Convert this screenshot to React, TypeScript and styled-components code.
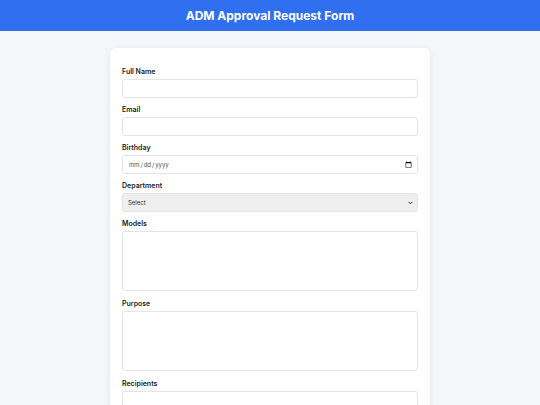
import React from "react";
import styled, { createGlobalStyle } from "styled-components";

const Global = createGlobalStyle`
  html, body { margin: 0; padding: 0; }
  body {
    background: #f4f6fa;
    font-family: Inter, "Noto Sans", "Liberation Sans", sans-serif;
    color: #222;
  }
  * { box-sizing: border-box; }
`;

const Header = styled.header`
  height: 31px;
  background: #2f6ff0;
  display: flex;
  align-items: center;
  justify-content: center;
`;

const Title = styled.h1`
  margin: 0;
  color: #fff;
  font-size: 12px;
  font-weight: 700;
`;

const Main = styled.main`
  display: flex;
  justify-content: center;
  padding-top: 17px;
`;

const Card = styled.form`
  width: 320px;
  background: #fff;
  border-radius: 6px;
  box-shadow: 0 1px 6px rgba(20, 30, 60, 0.08);
  padding: 19px 12px 16px;
`;

const Field = styled.div`
  margin-bottom: 7px;
`;

const Label = styled.label`
  display: block;
  font-size: 7px;
  line-height: 10px;
  font-weight: 600;
  color: #222;
  margin-bottom: 2px;
`;

const Input = styled.input`
  display: block;
  width: 100%;
  height: 19px;
  border: 1px solid #e2e4e8;
  border-radius: 3px;
  background: #fff;
  font-family: inherit;
  font-size: 6px;
  padding: 0 5px;
  color: #555;
  outline: none;
  &::-webkit-calendar-picker-indicator {
    width: 7px;
    height: 7px;
    padding: 0;
    margin: 0;
  }
`;

const chevron =
  "data:image/svg+xml;utf8," +
  encodeURIComponent(
    '<svg xmlns="http://www.w3.org/2000/svg" width="6" height="4" viewBox="0 0 6 4"><path d="M0.6 0.6 L3 3 L5.4 0.6" fill="none" stroke="#333" stroke-width="1.1"/></svg>'
  );

const Select = styled.select`
  display: block;
  width: 100%;
  height: 19px;
  appearance: none;
  -webkit-appearance: none;
  border: 1px solid #e2e4e8;
  border-radius: 3px;
  background: #efefef url("${chevron}") no-repeat right 4px center / 5px 4px;
  font-family: inherit;
  font-size: 6px;
  padding: 0 5px;
  color: #333;
  outline: none;
`;

const TextArea = styled.textarea`
  display: block;
  width: 100%;
  height: 60px;
  border: 1px solid #e2e4e8;
  border-radius: 3px;
  background: #fff;
  font-family: inherit;
  font-size: 6px;
  padding: 4px 5px;
  resize: none;
  outline: none;
`;

const TallField = styled(Field)`
  margin-bottom: 8px;
`;

export default function App() {
  return (
    <>
      <Global />
      <Header>
        <Title>ADM Approval Request Form</Title>
      </Header>
      <Main>
        <Card onSubmit={(e) => e.preventDefault()}>
          <Field>
            <Label htmlFor="name">Full Name</Label>
            <Input id="name" type="text" />
          </Field>
          <Field>
            <Label htmlFor="email">Email</Label>
            <Input id="email" type="email" />
          </Field>
          <Field>
            <Label htmlFor="bday">Birthday</Label>
            <Input id="bday" type="date" />
          </Field>
          <Field>
            <Label htmlFor="dept">Department</Label>
            <Select id="dept" defaultValue="">
              <option value="">Select</option>
              <option value="eng">Engineering</option>
              <option value="ops">Operations</option>
            </Select>
          </Field>
          <TallField>
            <Label htmlFor="models">Models</Label>
            <TextArea id="models" />
          </TallField>
          <TallField>
            <Label htmlFor="purpose">Purpose</Label>
            <TextArea id="purpose" />
          </TallField>
          <Field>
            <Label htmlFor="recipients">Recipients</Label>
            <Input id="recipients" type="text" />
          </Field>
        </Card>
      </Main>
    </>
  );
}
